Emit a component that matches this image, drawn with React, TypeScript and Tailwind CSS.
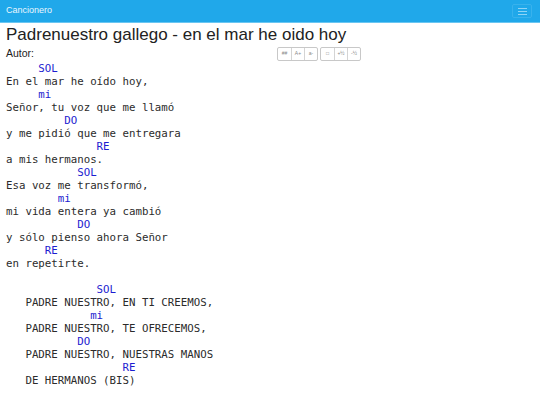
import React from 'react';

type Line = { t: string; chord?: boolean };

const song: Line[] = [
  { t: '     SOL', chord: true },
  { t: 'En el mar he oído hoy,' },
  { t: '     mi', chord: true },
  { t: 'Señor, tu voz que me llamó' },
  { t: '         DO', chord: true },
  { t: 'y me pidió que me entregara' },
  { t: '              RE', chord: true },
  { t: 'a mis hermanos.' },
  { t: '           SOL', chord: true },
  { t: 'Esa voz me transformó,' },
  { t: '        mi', chord: true },
  { t: 'mi vida entera ya cambió' },
  { t: '           DO', chord: true },
  { t: 'y sólo pienso ahora Señor' },
  { t: '      RE', chord: true },
  { t: 'en repetirte.' },
  { t: '' },
  { t: '              SOL', chord: true },
  { t: '   PADRE NUESTRO, EN TI CREEMOS,' },
  { t: '             mi', chord: true },
  { t: '   PADRE NUESTRO, TE OFRECEMOS,' },
  { t: '           DO', chord: true },
  { t: '   PADRE NUESTRO, NUESTRAS MANOS' },
  { t: '                  RE', chord: true },
  { t: '   DE HERMANOS (BIS)' },
];

const groups = [
  ['##', 'A+', 'a-'],
  ['□', '+½', '-½'],
];

export default function App() {
  return (
    <div className="w-[540px] h-[405px] overflow-hidden bg-white font-['Liberation_Sans',Arial,sans-serif]">
      <nav className="h-[23px] bg-[#20a8ea] border-b border-[#6ac6f2] flex items-center justify-between pl-[6px] pr-[8px]">
        <span className="text-[9px] text-[#eaf7fe]">Cancionero</span>
        <button className="w-[20px] h-[14px] rounded-[2px] border border-[#38b2ed] flex flex-col items-center justify-center gap-[2px]">
          <span className="block w-[9px] h-px bg-[#8fd4f6]" />
          <span className="block w-[9px] h-px bg-[#8fd4f6]" />
          <span className="block w-[9px] h-px bg-[#8fd4f6]" />
        </button>
      </nav>
      <div className="px-[6px]">
        <h1 className="text-[17px] leading-[22px] text-[#222] mt-[1px]">
          Padrenuestro gallego - en el mar he oido hoy
        </h1>
        <div className="flex items-center h-[15px]">
          <span className="text-[10.5px] text-[#222] w-[271px]">Autor:</span>
          <div className="flex gap-[2px]">
            {groups.map((g, i) => (
              <div key={i} className="flex border border-[#c8c8c8] rounded-[2px]">
                {g.map((b, j) => (
                  <span
                    key={b}
                    className={`w-[13px] h-[12px] flex items-center justify-center text-[5px] text-[#888] ${j > 0 ? 'border-l border-[#d4d4d4]' : ''}`}
                  >
                    {b}
                  </span>
                ))}
              </div>
            ))}
          </div>
        </div>
        <pre className="font-['DejaVu_Sans_Mono',monospace] text-[10.75px] leading-[13px] text-[#2b2b2b] mt-[1px]">
          {song.map((l, i) => (
            <div key={i} className={l.chord ? 'text-[#1c1cd0]' : ''}>
              {l.t || ' '}
            </div>
          ))}
        </pre>
      </div>
    </div>
  );
}
